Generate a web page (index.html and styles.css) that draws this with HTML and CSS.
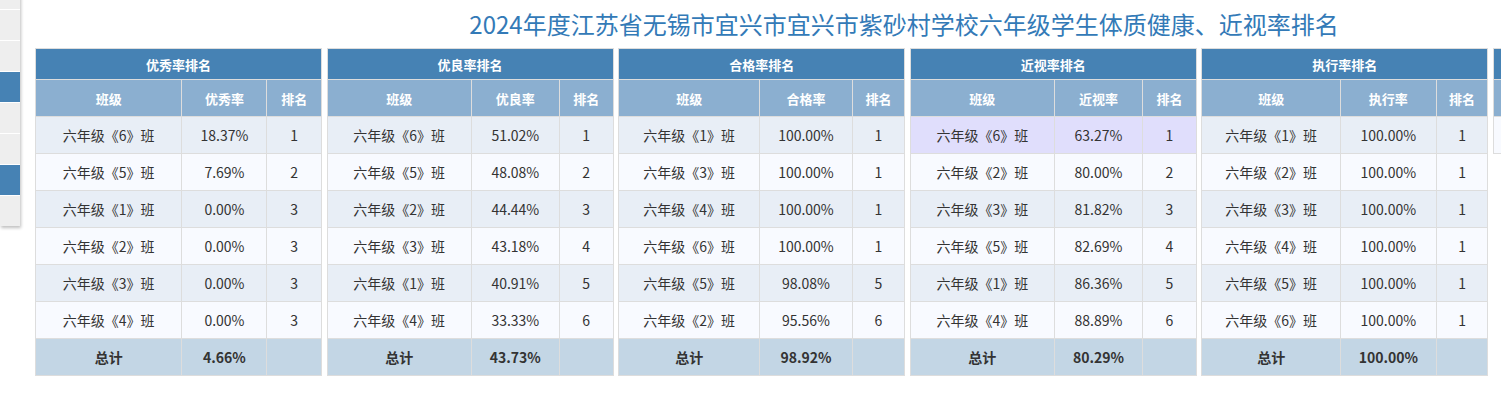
FILE: index.html
```html
<!DOCTYPE html>
<html lang="zh-CN">
<head>
<meta charset="utf-8">
<title>排名</title>
<link rel="stylesheet" href="styles.css">
</head>
<body>
<div class="side-menu">
  <div class="side-item"></div>
  <div class="side-item"></div>
  <div class="side-item"></div>
  <div class="side-item active"></div>
  <div class="side-item"></div>
  <div class="side-item"></div>
  <div class="side-item active"></div>
  <div class="side-item"></div>
</div>
<div class="page">
  <h1 class="title">2024年度江苏省无锡市宜兴市宜兴市紫砂村学校六年级学生体质健康、近视率排名</h1>
  <div class="tables">
    <table class="rank">
      <thead>
        <tr><th colspan="3" class="cap">优秀率排名</th></tr>
        <tr><th>班级</th><th>优秀率</th><th>排名</th></tr>
      </thead>
      <tbody>
        <tr><td>六年级《6》班</td><td>18.37%</td><td>1</td></tr>
        <tr><td>六年级《5》班</td><td>7.69%</td><td>2</td></tr>
        <tr><td>六年级《1》班</td><td>0.00%</td><td>3</td></tr>
        <tr><td>六年级《2》班</td><td>0.00%</td><td>3</td></tr>
        <tr><td>六年级《3》班</td><td>0.00%</td><td>3</td></tr>
        <tr><td>六年级《4》班</td><td>0.00%</td><td>3</td></tr>
        <tr class="total"><td>总计</td><td>4.66%</td><td></td></tr>
      </tbody>
    </table>
    <table class="rank">
      <thead>
        <tr><th colspan="3" class="cap">优良率排名</th></tr>
        <tr><th>班级</th><th>优良率</th><th>排名</th></tr>
      </thead>
      <tbody>
        <tr><td>六年级《6》班</td><td>51.02%</td><td>1</td></tr>
        <tr><td>六年级《5》班</td><td>48.08%</td><td>2</td></tr>
        <tr><td>六年级《2》班</td><td>44.44%</td><td>3</td></tr>
        <tr><td>六年级《3》班</td><td>43.18%</td><td>4</td></tr>
        <tr><td>六年级《1》班</td><td>40.91%</td><td>5</td></tr>
        <tr><td>六年级《4》班</td><td>33.33%</td><td>6</td></tr>
        <tr class="total"><td>总计</td><td>43.73%</td><td></td></tr>
      </tbody>
    </table>
    <table class="rank">
      <thead>
        <tr><th colspan="3" class="cap">合格率排名</th></tr>
        <tr><th>班级</th><th>合格率</th><th>排名</th></tr>
      </thead>
      <tbody>
        <tr><td>六年级《1》班</td><td>100.00%</td><td>1</td></tr>
        <tr><td>六年级《3》班</td><td>100.00%</td><td>1</td></tr>
        <tr><td>六年级《4》班</td><td>100.00%</td><td>1</td></tr>
        <tr><td>六年级《6》班</td><td>100.00%</td><td>1</td></tr>
        <tr><td>六年级《5》班</td><td>98.08%</td><td>5</td></tr>
        <tr><td>六年级《2》班</td><td>95.56%</td><td>6</td></tr>
        <tr class="total"><td>总计</td><td>98.92%</td><td></td></tr>
      </tbody>
    </table>
    <table class="rank">
      <thead>
        <tr><th colspan="3" class="cap">近视率排名</th></tr>
        <tr><th>班级</th><th>近视率</th><th>排名</th></tr>
      </thead>
      <tbody>
        <tr class="hl"><td>六年级《6》班</td><td>63.27%</td><td>1</td></tr>
        <tr><td>六年级《2》班</td><td>80.00%</td><td>2</td></tr>
        <tr><td>六年级《3》班</td><td>81.82%</td><td>3</td></tr>
        <tr><td>六年级《5》班</td><td>82.69%</td><td>4</td></tr>
        <tr><td>六年级《1》班</td><td>86.36%</td><td>5</td></tr>
        <tr><td>六年级《4》班</td><td>88.89%</td><td>6</td></tr>
        <tr class="total"><td>总计</td><td>80.29%</td><td></td></tr>
      </tbody>
    </table>
    <table class="rank">
      <thead>
        <tr><th colspan="3" class="cap">执行率排名</th></tr>
        <tr><th>班级</th><th>执行率</th><th>排名</th></tr>
      </thead>
      <tbody>
        <tr><td>六年级《1》班</td><td>100.00%</td><td>1</td></tr>
        <tr><td>六年级《2》班</td><td>100.00%</td><td>1</td></tr>
        <tr><td>六年级《3》班</td><td>100.00%</td><td>1</td></tr>
        <tr><td>六年级《4》班</td><td>100.00%</td><td>1</td></tr>
        <tr><td>六年级《5》班</td><td>100.00%</td><td>1</td></tr>
        <tr><td>六年级《6》班</td><td>100.00%</td><td>1</td></tr>
        <tr class="total"><td>总计</td><td>100.00%</td><td></td></tr>
      </tbody>
    </table>
    <table class="rank">
      <thead>
        <tr><th colspan="3" class="cap"></th></tr>
        <tr><th></th><th></th><th></th></tr>
      </thead>
      <tbody>
        <tr class="empty"><td colspan="3"></td></tr>
      </tbody>
    </table>
  </div>
</div>
</body>
</html>
```
FILE: styles.css
```css
html, body {
  margin: 0;
  padding: 0;
  background: #ffffff;
  overflow: hidden;
}

body {
  font-family: "Noto Sans CJK SC", "Noto Sans", sans-serif;
  color: #333333;
}

.side-menu {
  position: fixed;
  left: 0;
  top: -21px;
  width: 20px;
  background: #ffffff;
  box-shadow: 1px 2px 3px rgba(0, 0, 0, 0.25);
  display: flex;
  flex-direction: column;
  gap: 1px;
  z-index: 5;
}

.side-item {
  height: 30px;
  background: #eeeeee;
}

.side-item.active {
  background: #4682b4;
}

.page {
  width: 1738px;
  padding-left: 35px;
}

.title {
  margin: 0;
  padding-top: 6px;
  height: 48px;
  box-sizing: border-box;
  font-size: 24px;
  line-height: 36px;
  font-weight: normal;
  color: #337ab7;
  text-align: center;
  white-space: nowrap;
}

.tables {
  display: grid;
  grid-template-columns: repeat(6, 287px);
  column-gap: 4.6px;
  align-items: start;
}

.rank {
  width: 287px;
  border-collapse: collapse;
  border: 1px solid #dddddd;
  font-size: 14px;
  text-align: center;
}

.rank th,
.rank td {
  border: 1px solid #dddddd;
  padding: 0 6px;
  white-space: nowrap;
}

.rank th {
  height: 36px;
  font-size: 13px;
  font-weight: bold;
  color: #ffffff;
  background: #8bafd0;
}

.rank th.cap {
  height: 30px;
  background: #4682b4;
}

.rank td {
  height: 36px;
  color: #333333;
}

.rank tbody tr:nth-child(odd) td {
  background: #e8eef6;
}

.rank tbody tr:nth-child(even) td {
  background: #f8faff;
}

.rank tbody tr.hl td {
  background: #e0defc;
}

.rank tbody tr.total td {
  background: #c3d6e5;
  font-weight: bold;
}

.rank tbody tr.empty td {
  background: #f8faff;
}
```
